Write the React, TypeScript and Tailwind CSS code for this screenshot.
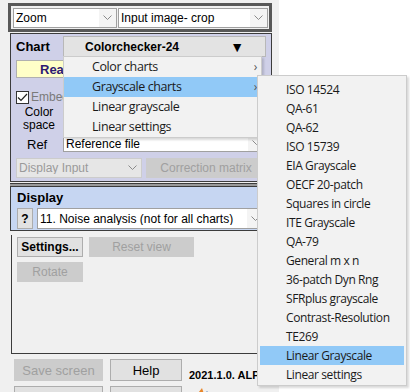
import React from "react";

const ARIAL = { fontFamily: '"Liberation Sans", Arial, sans-serif' };
const SEGOE = { fontFamily: '"Open Sans", "Noto Sans", sans-serif', letterSpacing: "-0.4px" };

function Chevron() {
  return (
    <svg width="9" height="6" viewBox="0 0 9 6">
      <path d="M0.5 0.5 L4.5 4.5 L8.5 0.5" fill="none" stroke="#8a8a8a" strokeWidth="1" />
    </svg>
  );
}

function Combo({ text, className = "", textClass = "", disabled = false }: { text: string; className?: string; textClass?: string; disabled?: boolean }) {
  return (
    <div
      className={`flex shrink-0 items-center border ${disabled ? "border-[#cccccc] bg-[#e6e6e6] text-[#9a9a9a]" : "border-[#a0a0a0] bg-white text-black"} ${className}`}
    >
      <div className={`flex-1 truncate pl-[2px] text-[12px] leading-none ${textClass}`} style={ARIAL}>
        {text}
      </div>
      <div className={`flex h-full w-[17px] items-center justify-center ${disabled ? "" : "bg-[#f4f4f4]"}`}>
        <Chevron />
      </div>
    </div>
  );
}

function Btn({ text, className = "", disabled = false, bold = false }: { text: string; className?: string; disabled?: boolean; bold?: boolean }) {
  return (
    <div
      className={`flex shrink-0 items-center justify-center border text-[12px] leading-none ${disabled ? "border-[#cccccc] bg-[#cccccc] text-[#a0a0a0]" : "border-[#adadad] bg-[#e1e1e1] text-black"} ${bold ? "font-bold" : ""} ${className}`}
      style={ARIAL}
    >
      {text}
    </div>
  );
}

const subItems = [
  "ISO 14524",
  "QA-61",
  "QA-62",
  "ISO 15739",
  "EIA Grayscale",
  "OECF 20-patch",
  "Squares in circle",
  "ITE Grayscale",
  "QA-79",
  "General m x n",
  "36-patch Dyn Rng",
  "SFRplus grayscale",
  "Contrast-Resolution",
  "TE269",
  "Linear Grayscale",
  "Linear settings",
];

export default function App() {
  return (
    <div className="relative h-[392px] w-[410px] overflow-hidden bg-white">
      {/* left application column */}
      <div className="flex h-full w-[279px] flex-col bg-[#f0f0f0]">
        {/* top frame */}
        <div className="ml-[8px] mt-[3px] flex h-[29px] w-[264px] shrink-0 items-center gap-px border-[3px] border-[#585858] px-[2px]">
          <Combo text="Zoom" className="h-[20px] w-[104px]" />
          <Combo text="Input image- crop" className="h-[20px] w-[150px]" />
        </div>

        {/* chart panel */}
        <div className="ml-[10px] mt-px flex h-[149px] w-[262px] shrink-0 flex-col border border-[#3c3c3c] bg-[#cfd0e8] px-[5px]">
          <div className="mt-[2px] flex h-[21px] shrink-0 items-center">
            <div className="w-[47px] text-[13px] font-bold leading-none" style={ARIAL}>
              Chart
            </div>
            <div className="flex h-[21px] flex-1 items-center border border-[#b8b8b8] bg-[#e3e3e3]">
              <div className="flex-1 pl-[21px] text-[12px] font-bold leading-none" style={ARIAL}>
                Colorchecker-24
              </div>
              <div className="mr-[21px] text-[14px] leading-none">▼</div>
            </div>
          </div>
          <div className="mt-[3px] flex h-[18px] w-[140px] shrink-0 items-center border border-[#b0b0b0] bg-[#ffffc8] pl-[23px] text-[13px] font-bold leading-none text-[#2e1a72]" style={ARIAL}>
            Read
          </div>
          <div className="mt-[12px] flex h-[14px] shrink-0 items-center gap-[2px]">
            <div className="flex h-[13px] w-[13px] items-center justify-center border border-[#333] bg-white">
              <svg width="11" height="9" viewBox="0 0 11 9">
                <path d="M1 4.5 L4 7.5 L10 1" fill="none" stroke="#222" strokeWidth="1.2" />
              </svg>
            </div>
            <div className="text-[12px] leading-none text-[#7a7a7a]" style={ARIAL}>
              Embed
            </div>
          </div>
          <div className="mt-[2px] flex w-[46px] shrink-0 flex-col items-center text-[12px] leading-[13px]" style={ARIAL}>
            <div>Color</div>
            <div>space</div>
          </div>
          <div className="mt-px flex h-[19px] shrink-0 items-center">
            <div className="mt-[4px] w-[47px] pl-[11px] text-[13px] leading-none" style={ARIAL}>
              Ref
            </div>
            <Combo text="Reference file" className="h-[19px] flex-1" textClass="mt-[3px]" />
          </div>
          <div className="mt-[6px] flex h-[20px] shrink-0 items-center gap-[4px]">
            <Combo text="Display Input" className="h-[20px] w-[126px]" disabled />
            <Btn text="Correction matrix" className="h-[20px] flex-1" disabled />
          </div>
        </div>

        {/* double separator */}
        <div className="ml-[10px] mt-px h-[4px] w-[262px] shrink-0 border-y border-[#3c3c3c] bg-[#9a9a9a]" />

        {/* display panel */}
        <div className="ml-[10px] flex h-[44px] w-[262px] shrink-0 flex-col border-x border-b border-[#3c3c3c] bg-[#c6d6f2] px-[6px]">
          <div className="mt-[3px] text-[13px] font-bold leading-[16px]" style={ARIAL}>
            Display
          </div>
          <div className="mt-[2px] flex h-[21px] items-center gap-[4px]">
            <Btn text="?" className="h-[21px] w-[16px]" bold />
            <Combo text="11. Noise analysis (not for all charts)" className="h-[21px] flex-1" />
          </div>
        </div>

        {/* lower panel */}
        <div className="ml-[11px] mt-[4px] flex h-[119px] w-[261px] shrink-0 flex-col gap-[5px] border-b border-l border-[#3c3c3c] px-[5px] pt-[2px]">
          <div className="flex gap-[6px]">
            <Btn text="Settings..." className="h-[20px] w-[66px]" bold />
            <Btn text="Reset view" className="h-[20px] w-[105px]" disabled />
          </div>
          <Btn text="Rotate" className="h-[20px] w-[66px]" disabled />
        </div>

        {/* bottom buttons */}
        <div className="ml-[14px] mt-[5px] flex shrink-0 items-end gap-[7px]">
          <Btn text="Save screen" className="h-[22px] w-[89px] text-[13px]" disabled />
          <Btn text="Help" className="h-[22px] w-[72px] text-[13px]" />
          <div className="text-[11px] font-bold leading-none" style={ARIAL}>
            2021.1.0. ALPHA
          </div>
        </div>
        <div className="ml-[14px] mt-[5px] flex shrink-0 items-start gap-[7px]">
          <div className="h-[22px] w-[89px] shrink-0 border border-[#adadad] bg-[#e1e1e1]" />
          <div className="h-[22px] w-[72px] shrink-0 border border-[#adadad] bg-[#e1e1e1]" />
          <svg width="20" height="10" viewBox="0 0 20 10" className="ml-[4px] mt-[1px]">
            <path d="M2 10 L9 1 L12 10 Z" fill="#e8862a" />
            <path d="M10 10 L14 4 L18 10 Z" fill="#3a6fb8" />
          </svg>
        </div>
      </div>

      {/* background text to the right */}
      <div className="absolute left-[360px] top-[230px] text-[12px]" style={SEGOE}>
        n
      </div>

      {/* dropdown menu */}
      <div className="absolute left-[63px] top-[56px] w-[199px] border border-[#cccccc] bg-[#f2f2f2] shadow-[2px_2px_2px_rgba(0,0,0,0.15)]" style={SEGOE}>
        {["Color charts", "Grayscale charts", "Linear grayscale", "Linear settings"].map((t, i) => (
          <div
            key={t}
            className={`flex h-[20px] items-center pl-[28px] pr-[4px] text-[12.5px] text-[#1a1a1a] ${i === 1 ? "bg-[#91c9f7]" : ""}`}
          >
            <span className="flex-1">{t}</span>
            {i < 2 && <span className="text-[12px] text-[#555]">›</span>}
          </div>
        ))}
      </div>

      {/* submenu */}
      <div className="absolute left-[257px] top-[75px] w-[150px] border border-[#cccccc] bg-[#f2f2f2] px-[2px] pb-px pt-[4px] shadow-[2px_2px_2px_rgba(0,0,0,0.15)]" style={SEGOE}>
        {subItems.map((t) => (
          <div
            key={t}
            className={`flex h-[19px] items-center pl-[26px] text-[12px] text-[#1a1a1a] ${t === "Linear Grayscale" ? "bg-[#91c9f7]" : ""}`}
          >
            {t}
          </div>
        ))}
      </div>
    </div>
  );
}
